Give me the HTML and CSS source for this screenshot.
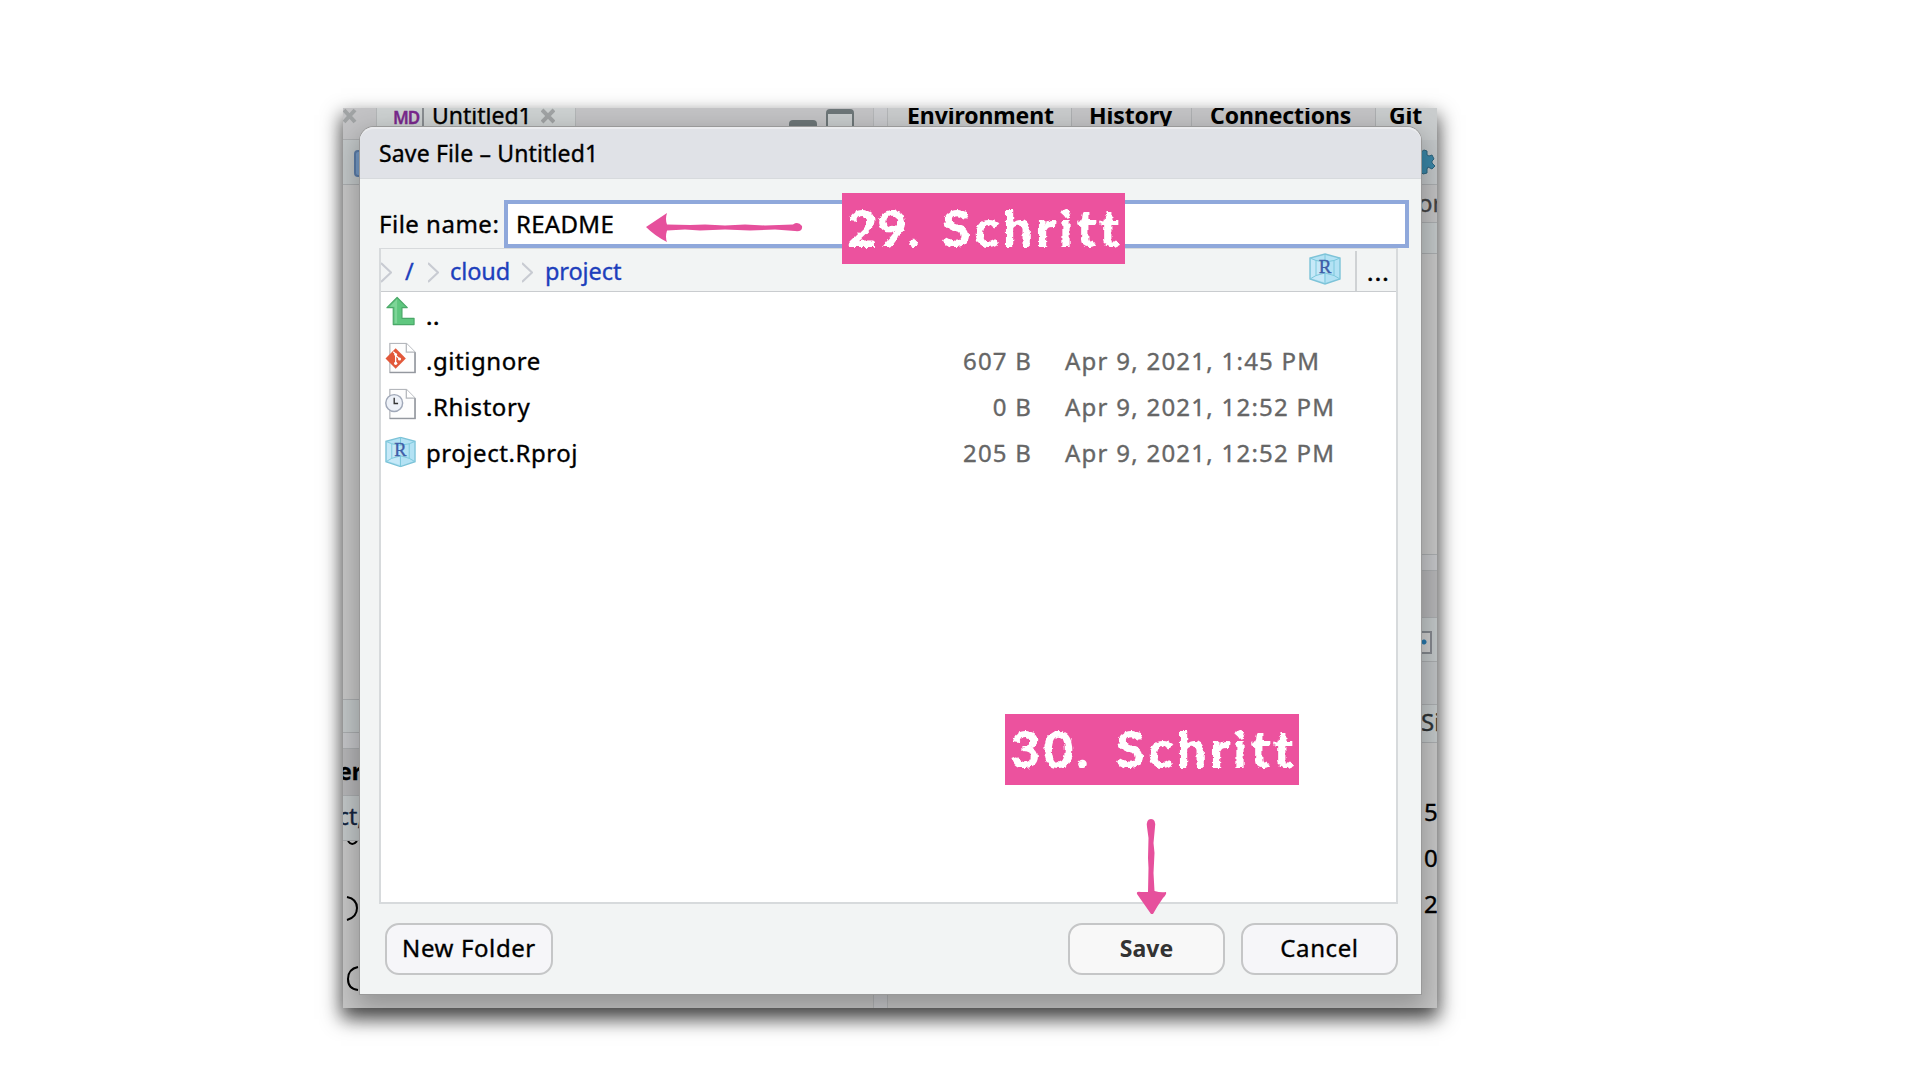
FILE: index.html
```html
<!DOCTYPE html>
<html lang="en">
<head>
<meta charset="utf-8">
<title>Save File</title>
<link rel="stylesheet" href="styles.css">
</head>
<body>
<svg class="defs" width="0" height="0" aria-hidden="true">
  <filter id="chalk" x="-5%" y="-5%" width="110%" height="110%">
    <feTurbulence type="fractalNoise" baseFrequency="0.22" numOctaves="2" seed="4"/>
    <feDisplacementMap in="SourceGraphic" scale="4.5" xChannelSelector="R" yChannelSelector="G"/>
  </filter>
  <symbol id="rcube" viewBox="0 0 32 32">
    <path d="M16 1 31 5V26L16 31 1 26V5Z" fill="#b3e2f4" stroke="#7dc3d8" stroke-width="1.4"/>
    <path d="M2 6 15 10V29L2 25Z" fill="#d2effa" opacity=".6"/>
    <path d="M1 5 7 7.500V22.500L1 26M31 5 25 7.500V22.500L31 26M7 7.500 16 9 25 7.500M7 22.500 16 20 25 22.500M16 20V31M16 1V9" fill="none" stroke="#7cc8dc" stroke-width="1"/>
    <text x="16" y="20" text-anchor="middle" class="cube-letter">R</text>
  </symbol>
  <symbol id="page" viewBox="0 0 32 32">
    <path d="M5 1H22L31 10V31H5Z" fill="#fdfdfd" stroke="#b4b7bc" stroke-width="1.3"/>
    <path d="M22 1V10H31" fill="#fff" stroke="#b4b7bc" stroke-width="1.3"/>
    <path d="M5 31H31V10" fill="none" stroke="#94989f" stroke-width="1.5"/>
  </symbol>
</svg>
<main class="window">
  <div class="ide">
    <section class="pane pane-left">
      <div class="tabs">
        <svg class="close first" width="14" height="16" viewBox="0 0 14 16"><path d="M1 2 12 14M12 2 1 14"/></svg>
        <div class="tab">
          <span class="md-icon">MD</span><span class="tab-name">Untitled1</span><svg class="close" width="14" height="16" viewBox="0 0 14 16"><path d="M1 2 13 14M13 2 1 14"/></svg>
        </div>
        <i class="minimize"></i><i class="maximize"></i>
      </div>
      <div class="bar left-toolbar"><i class="blue-icon"></i></div>
      <div class="blank left-editor"></div>
      <div class="bar left-status"></div>
      <div class="gap left-gap"></div>
      <div class="head left-head">er</div>
      <div class="bar left-path">ct,</div>
      <div class="console">
        <svg width="17" height="168" viewBox="0 0 17 168" fill="none" stroke="#000" stroke-width="2"><path d="M5 0Q9 6 14 0M4 56Q14 58 14 67T4 79M15 126Q5 128 5 138T15 149"/></svg>
      </div>
    </section>
    <div class="splitter"></div>
    <section class="pane pane-right">
      <div class="tabs env-tabs"><span class="env">Environment</span><span class="hist">History</span><span class="conn">Connections</span><span class="git">Git</span></div>
      <div class="bar gear-row">
        <svg width="14" height="26" viewBox="0 0 14 26"><path d="M0 3 3 1 6 2 6 6 8 7 11 6 13 10 11 12V14L14 17 11 20 7 18 6 20V24L2 25 0 23Z" fill="#3b87a8" stroke="#2d6680"/></svg>
      </div>
      <div class="head or-row">or</div>
      <div class="bar r-bar1"></div>
      <div class="blank r-blank"></div>
      <div class="gap r-gap"></div>
      <div class="head r-head"></div>
      <div class="bar r-tool"><i class="frame-icon"></i></div>
      <div class="bar r-bar2"></div>
      <div class="bar r-size">Si</div>
      <div class="numbers"><span>5</span><span>0</span><span>2</span></div>
    </section>
  </div>

  <div class="dialog">
    <header class="title">Save File – Untitled1</header>
    <div class="name-row"><label class="name-label">File name:</label><div class="name-input">README</div></div>
    <div class="browser">
      <nav class="crumbs">
        <svg class="chev c1" viewBox="0 0 11 21"><path d="M0 1 10 10.500 0 20"/></svg>
        <span class="crumb root">/</span>
        <svg class="chev c2" viewBox="0 0 11 21"><path d="M0 1 10 10.500 0 20"/></svg>
        <span class="crumb cloud">cloud</span>
        <svg class="chev c3" viewBox="0 0 11 21"><path d="M0 1 10 10.500 0 20"/></svg>
        <span class="crumb proj">project</span>
        <svg class="crumb-cube" viewBox="0 0 32 32"><use href="#rcube"/></svg>
        <span class="more">...</span>
      </nav>
      <div class="files">
        <div class="file">
          <svg class="icon" viewBox="0 0 32 32"><path d="M12.500 1 23 11.500H17.500V22.500H30V29H8.500V11.500H2Z" fill="#5fc77f" stroke="#4aa868" stroke-width="1.2" stroke-linejoin="round"/><path d="M12.500 2.500V27.500H10V10.500H5Z" fill="#8bdca2" opacity=".7"/></svg>
          <span class="fname dots">..</span>
        </div>
        <div class="file">
          <svg class="icon" viewBox="0 0 32 32"><use href="#page"/><path d="M11 6 21.500 16.500 11 27 .5 16.500Z" fill="#e2583a"/><path d="M8.500 9.500 11 12V21.500M11 13 15 17" fill="none" stroke="#fff" stroke-width="1.3"/><circle cx="11" cy="21.500" r="1.700" fill="#fff"/><circle cx="15" cy="17" r="1.600" fill="#fff"/><circle cx="11" cy="12.500" r="1.500" fill="#fff"/></svg>
          <span class="fname">.gitignore</span><span class="size">607 B</span><span class="date">Apr 9, 2021, 1:45 PM</span>
        </div>
        <div class="file">
          <svg class="icon" viewBox="0 0 32 32"><use href="#page"/><circle cx="9.500" cy="15" r="8.700" fill="#edf1f8" stroke="#a0a8b8" stroke-width="1.500"/><path d="M9.500 9.500V15.500H13.500" fill="none" stroke="#333" stroke-width="1.400"/></svg>
          <span class="fname">.Rhistory</span><span class="size">0 B</span><span class="date">Apr 9, 2021, 12:52 PM</span>
        </div>
        <div class="file rproj">
          <svg class="icon" viewBox="0 0 32 32"><use href="#rcube"/></svg>
          <span class="fname">project.Rproj</span><span class="size">205 B</span><span class="date">Apr 9, 2021, 12:52 PM</span>
        </div>
      </div>
    </div>
    <footer class="actions">
      <button class="btn new">New Folder</button>
      <button class="btn save">Save</button>
      <button class="btn">Cancel</button>
    </footer>
  </div>
</main>
<div class="step step-29"><span class="num">29.</span><span class="word">Schritt</span></div>
<div class="step step-30"><span class="num">30.</span><span class="word">Schritt</span></div>
<svg class="arrow arrow-left" width="160" height="32" viewBox="0 0 160 32"><path d="M1 15 22 1Q20 7 22 12.500L45 13 60 12.500 80 13.500 100 12.500 120 13.500 148 12.500Q153 9 157 14 158 20 150 19L130 17.500 105 18.500 80 17.500 55 18.500 40 17.500 22 18.500Q20 25 22 30Q10 24 1 15Z"/></svg>
<svg class="arrow arrow-down" width="32" height="97" viewBox="0 0 32 97"><path d="M15 96 1 76Q0 73 5 74L12 74 12.500 50 12 40 12.500 20 11 9Q10 1 15 1 20 1 19 9L17.500 25 18.500 35 17.500 55 18.500 73Q25 75 30 74 31 76 27 80Q22 87 17 96Z"/></svg>
</body>
</html>
```
FILE: styles.css
```css
* { box-sizing: border-box; }
body { margin: 0; width: 1920px; height: 1080px; overflow: hidden; position: relative; background: #fff; font-family: "Noto Sans", sans-serif; font-size: 24px; line-height: 1; color: #000; }
.defs { position: absolute; }
.window { position: absolute; left: 343px; top: 108px; width: 1094px; height: 900px; background: #c8c8c8; box-shadow: 0 9px 18px 2px rgba(0,0,0,.68); -webkit-text-stroke: .35px; }
.ide { display: grid; grid-template-columns: 530px 15px 549px; height: 900px; overflow: hidden; }
.pane { display: flex; flex-direction: column; overflow: hidden; white-space: nowrap; }
.splitter { background: #c9cacd; border: 1px solid #b4b6b8; border-width: 0 1px; }
.tabs { height: 32px; flex: none; display: flex; background: #c3c3c5; border-bottom: 1px solid #adafb1; }
.close { fill: none; stroke: #a0a3a4; stroke-width: 4; flex: none; }
.close.first { margin-right: 19px; }
.tab { width: 200px; display: flex; background: #cdd1d1; border: 1px solid #b3b6b7; border-width: 0 1px; padding-left: 16px; }
.md-icon { width: 31px; height: 30px; border-right: 2px solid #888c90; color: #79288c; font-size: 17px; line-height: 20px; font-weight: 600; letter-spacing: -1px; }
.tab-name { width: 117px; padding-left: 8px; font-size: 23px; line-height: 14px; }
.minimize { width: 28px; height: 12px; margin: 12px 0 0 213px; background: #6d7678; border-radius: 4px; }
.maximize { width: 28px; height: 28px; margin: 1px 0 0 9px; border: 2px solid #6d7678; border-top-width: 5px; border-radius: 4px; background: #c8cccd; }
.bar, .head, .gap, .blank { flex: none; border-bottom: 1px solid #aaadaf; }
.bar { background: #c3c8c9; }
.head { background: #b6b6b8; }
.gap { background: #c5c6c9; }
.blank { background: #c7c7c7; }
.left-toolbar { height: 45px; padding: 10px 0 0 11px; }
.blue-icon { display: block; width: 20px; height: 27px; background: #769cc8; border: 2px solid #5b7da8; border-radius: 4px; }
.left-editor { height: 515px; }
.left-status { height: 33px; }
.left-gap { height: 16px; }
.left-head { height: 47px; font-weight: 700; line-height: 44px; font-size: 23px; text-indent: -5px; }
.left-path { height: 45px; line-height: 40px; color: #14253f; font-size: 23px; text-indent: -5px; }
.console { flex: 1; background: #c7c7c7; }
.env-tabs { font-weight: 700; line-height: 14px; font-size: 23px; letter-spacing: -.1px; border-bottom: 0; -webkit-text-stroke: 0; }
.env-tabs span { border-right: 1px solid #adafb1; padding-left: 19px; }
.env { width: 184px; background: #c9cbcc; }
.env-tabs .hist { width: 120px; padding-left: 17px; }
.env-tabs .conn { width: 184px; padding-left: 18px; }
.env-tabs .git { width: 61px; background: #c9cccd; border: 0; padding-left: 13px; }
.gear-row { height: 45px; padding: 9px 0 0 533px; background: #c3c7c9; }
.or-row { height: 38px; padding-left: 530px; line-height: 36px; color: #444; background: #c2c2c3; }
.r-bar1 { height: 31px; }
.r-blank { height: 301px; }
.r-gap { height: 16px; }
.r-head { height: 47px; }
.r-tool { height: 44px; padding: 13px 0 0 525px; }
.frame-icon { display: block; width: 19px; height: 23px; border: 2px solid #85898f; background: radial-gradient(circle at 9px 9px, #2878ac 0 2px, #cfcfcf 3px); }
.r-bar2 { height: 43px; background: #bfc2c4; }
.r-size { height: 38px; padding-left: 533px; line-height: 34px; color: #2f3436; }
.numbers { flex: 1; display: flex; flex-direction: column; padding: 57px 0 0 536px; background: #c7c7c7; }
.numbers span { height: 46px; line-height: 24px; }

.dialog { position: absolute; left: 17px; top: 19px; width: 1061px; height: 867px; background: #f2f4f4; border-radius: 14px 14px 0 0; box-shadow: 0 0 0 1px #999, 0 10px 26px 5px rgba(0,0,0,.25); display: flex; flex-direction: column; }
.title { height: 52px; flex: none; padding-left: 19px; font-size: 23px; line-height: 49px; letter-spacing: .15px; background: #e0e2e7; border-bottom: 1px solid #d7dadd; border-top: 2px solid #ebecef; border-radius: 14px 14px 0 0; }
.name-row { display: flex; flex: none; height: 48px; margin: 21px 12px 0 17px; }
.name-label { width: 127px; padding-left: 2px; line-height: 47px; letter-spacing: .5px; }
.name-input { width: 905px; height: 48px; background: #fff; border: 4px solid #8fa8db; padding-left: 8px; line-height: 39px; letter-spacing: .3px; }
.browser { width: 1019px; height: 656px; margin: 0 0 0 19px; flex: none; background: #fff; border: 2px solid #d7dadc; border-top-width: 1px; display: flex; flex-direction: column; }
.crumbs { height: 43px; flex: none; display: flex; background: #f2f4f4; border-bottom: 1px solid #c9cccf; }
.chev { width: 11px; height: 21px; margin-top: 13px; fill: none; stroke: #c8cbd2; stroke-width: 2; flex: none; }
.crumb { line-height: 45px; color: #1d3fbc; font-size: 23.5px; }
.root { width: 36px; padding-left: 13px; }
.cloud { width: 83px; padding-left: 11px; letter-spacing: -.1px; }
.proj { width: 110px; padding-left: 12px; letter-spacing: -.1px; }
.crumb-cube { width: 32px; height: 32px; margin: 4px 14px 0 auto; }
.more { width: 41px; border-left: 2px solid #cfd2d4; margin-top: 2px; padding-left: 10px; line-height: 41px; letter-spacing: 1.2px; -webkit-text-stroke: .6px; }
.cube-letter { font: 19px "Liberation Serif", serif; fill: #3f5ea8; stroke: #3f5ea8; stroke-width: .4px; -webkit-text-stroke: .4px #3f5ea8; }
.file { height: 46px; display: flex; }
.icon { width: 31px; height: 32px; margin: 4px 0 0 4px; flex: none; }
.rproj .icon { margin-top: 6px; }
.fname { width: 411px; padding-left: 10px; line-height: 45px; letter-spacing: .55px; }
.fname.dots { line-height: 47px; -webkit-text-stroke: .6px; }
.size { width: 205px; text-align: right; color: #666; line-height: 45px; letter-spacing: 1.2px; }
.date { padding-left: 33px; color: #666; line-height: 45px; letter-spacing: 1.25px; }
.actions { display: flex; padding: 19px 23px 0 25px; }
.btn { width: 157px; height: 52px; border: 2px solid #c5c6c7; border-radius: 14px; background: #f6f6f9; padding: 0 0 3px; font: 24px "Noto Sans", sans-serif; letter-spacing: .6px; color: #000; margin-left: 16px; -webkit-text-stroke: .35px; }
.btn.new { width: 168px; margin: 0 auto 0 0; }
.btn.save { font-weight: 700; color: #333; background: #f8f8f8; letter-spacing: 0; font-size: 23px; -webkit-text-stroke: 0; }

.step { position: absolute; height: 71px; background: #ec529e; color: #fff; font: 900 52px/68px Lato, sans-serif; display: flex; white-space: nowrap; }
.step span { filter: url(#chalk); }
.step-29 { left: 842px; top: 193px; width: 283px; padding-left: 5px; }
.step-30 { left: 1005px; top: 714px; width: 294px; padding-left: 5px; }
.step-29 .num { width: 95px; }
.step-30 .num { width: 106px; letter-spacing: 3px; }
.word { letter-spacing: 3.6px; }
.arrow { position: absolute; fill: #e6509c; }
.arrow-left { left: 645px; top: 212px; }
.arrow-down { left: 1136px; top: 818px; }
```
